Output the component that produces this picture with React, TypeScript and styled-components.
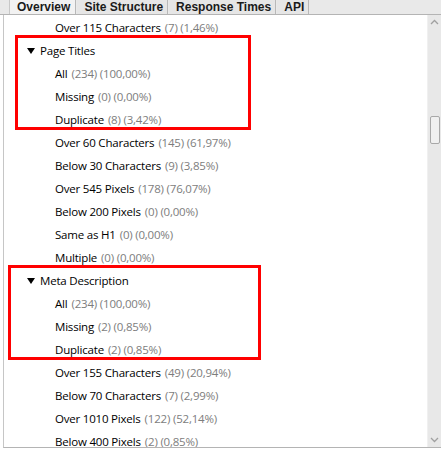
import React from 'react';
import styled, { createGlobalStyle } from 'styled-components';

const GlobalStyle = createGlobalStyle`
  html, body {
    margin: 0;
    padding: 0;
    background: #ffffff;
  }
`;

const Frame = styled.div`
  width: 441px;
  height: 450px;
  display: flex;
  flex-direction: column;
  overflow: hidden;
  background: #ffffff;
`;

const TabBar = styled.div`
  display: flex;
  align-items: stretch;
  height: 14px;
  padding-left: 9px;
  background: #e9e9e9;
  border-bottom: 1px solid #b4b4b4;
`;

const Tab = styled.div<{ $active?: boolean }>`
  display: flex;
  align-items: center;
  padding: ${(p) => (p.$active ? '0 5px 0 7px' : '0 4px 0 6px')};
  font-family: 'Liberation Sans', Arial, sans-serif;
  font-weight: bold;
  font-size: 12px;
  color: #1a1a1a;
  background: ${(p) => (p.$active ? '#f2f2f2' : '#e6e6e6')};
  border-left: 1px solid ${(p) => (p.$active ? '#c8c8c8' : 'transparent')};
  border-right: 1px solid #b8b8b8;
  margin-right: 1px;
`;

const Body = styled.div`
  flex: 1;
  display: flex;
  min-height: 0;
  margin-left: 3px;
  border-left: 1px solid #c6c6c6;
  border-bottom: 1px solid #b4b4b4;
  margin-bottom: 2px;
`;

const Tree = styled.div`
  flex: 1;
  overflow: hidden;
  padding-top: 1px;
`;

const Group = styled.div<{ $left: number; $width: number }>`
  position: relative;

  &::after {
    content: '';
    position: absolute;
    top: -4px;
    bottom: 1px;
    left: ${(p) => p.$left}px;
    width: ${(p) => p.$width}px;
    border: 3px solid #ff0000;
    box-sizing: border-box;
    pointer-events: none;
  }
`;

const Row = styled.div<{ $indent: number }>`
  display: flex;
  align-items: center;
  height: 23px;
  padding-left: ${(p) => p.$indent}px;
  font-family: 'Open Sans', 'Noto Sans', sans-serif;
  font-size: 11.5px;
  letter-spacing: -0.2px;
  color: #000000;
  white-space: nowrap;
`;

const Arrow = styled.span`
  width: 0;
  height: 0;
  border-left: 4px solid transparent;
  border-right: 4px solid transparent;
  border-top: 6px solid #000000;
  margin-right: 5px;
  margin-top: 1px;
`;

const Count = styled.span`
  color: #7d7d7d;
  margin-left: 4px;
`;

const Scrollbar = styled.div`
  width: 13px;
  display: flex;
  flex-direction: column;
  align-items: center;
  background: #e8e8e8;
  border-left: 1px solid #f0f0f0;
`;

const ScrollArrow = styled.div`
  height: 14px;
  display: flex;
  align-items: center;
  justify-content: center;
`;

const Track = styled.div`
  flex: 1;
  width: 100%;
  display: flex;
  flex-direction: column;
  align-items: center;
  padding-top: 87px;
`;

const Thumb = styled.div`
  width: 8px;
  height: 26px;
  border: 1px solid #a8a8a8;
  border-radius: 2px;
  background: #f0f0f0;
`;

const Chevron = ({ up }: { up?: boolean }) => (
  <svg width="9" height="6" viewBox="0 0 9 6">
    <path
      d={up ? 'M1 5 L4.5 1.5 L8 5' : 'M1 1 L4.5 4.5 L8 1'}
      fill="none"
      stroke="#a0a0a0"
      strokeWidth="1.3"
    />
  </svg>
);

type Item = { label: string; count: string; pct: string };

const Leaf = ({ label, count, pct }: Item) => (
  <Row $indent={51}>
    {label}
    <Count>({count}) ({pct})</Count>
  </Row>
);

const Parent = ({ label }: { label: string }) => (
  <Row $indent={23}>
    <Arrow />
    {label}
  </Row>
);

const pageTitleExtras: Item[] = [
  { label: 'Over 60 Characters', count: '145', pct: '61,97%' },
  { label: 'Below 30 Characters', count: '9', pct: '3,85%' },
  { label: 'Over 545 Pixels', count: '178', pct: '76,07%' },
  { label: 'Below 200 Pixels', count: '0', pct: '0,00%' },
  { label: 'Same as H1', count: '0', pct: '0,00%' },
  { label: 'Multiple', count: '0', pct: '0,00%' },
];

const metaExtras: Item[] = [
  { label: 'Over 155 Characters', count: '49', pct: '20,94%' },
  { label: 'Below 70 Characters', count: '7', pct: '2,99%' },
  { label: 'Over 1010 Pixels', count: '122', pct: '52,14%' },
  { label: 'Below 400 Pixels', count: '2', pct: '0,85%' },
];

const App = () => {
  return (
    <>
      <GlobalStyle />
      <Frame>
        <TabBar>
          <Tab $active>Overview</Tab>
          <Tab>Site Structure</Tab>
          <Tab>Response Times</Tab>
          <Tab>API</Tab>
        </TabBar>
        <Body>
          <Tree>
            <Leaf label="Over 115 Characters" count="7" pct="1,46%" />
            <Group $left={11} $width={236}>
              <Parent label="Page Titles" />
              <Leaf label="All" count="234" pct="100,00%" />
              <Leaf label="Missing" count="0" pct="0,00%" />
              <Leaf label="Duplicate" count="8" pct="3,42%" />
            </Group>
            {pageTitleExtras.map((it) => (
              <Leaf key={it.label} {...it} />
            ))}
            <Group $left={4} $width={253}>
              <Parent label="Meta Description" />
              <Leaf label="All" count="234" pct="100,00%" />
              <Leaf label="Missing" count="2" pct="0,85%" />
              <Leaf label="Duplicate" count="2" pct="0,85%" />
            </Group>
            {metaExtras.map((it) => (
              <Leaf key={it.label} {...it} />
            ))}
          </Tree>
          <Scrollbar>
            <ScrollArrow>
              <Chevron up />
            </ScrollArrow>
            <Track>
              <Thumb />
            </Track>
            <ScrollArrow>
              <Chevron />
            </ScrollArrow>
          </Scrollbar>
        </Body>
      </Frame>
    </>
  );
};

export default App;
